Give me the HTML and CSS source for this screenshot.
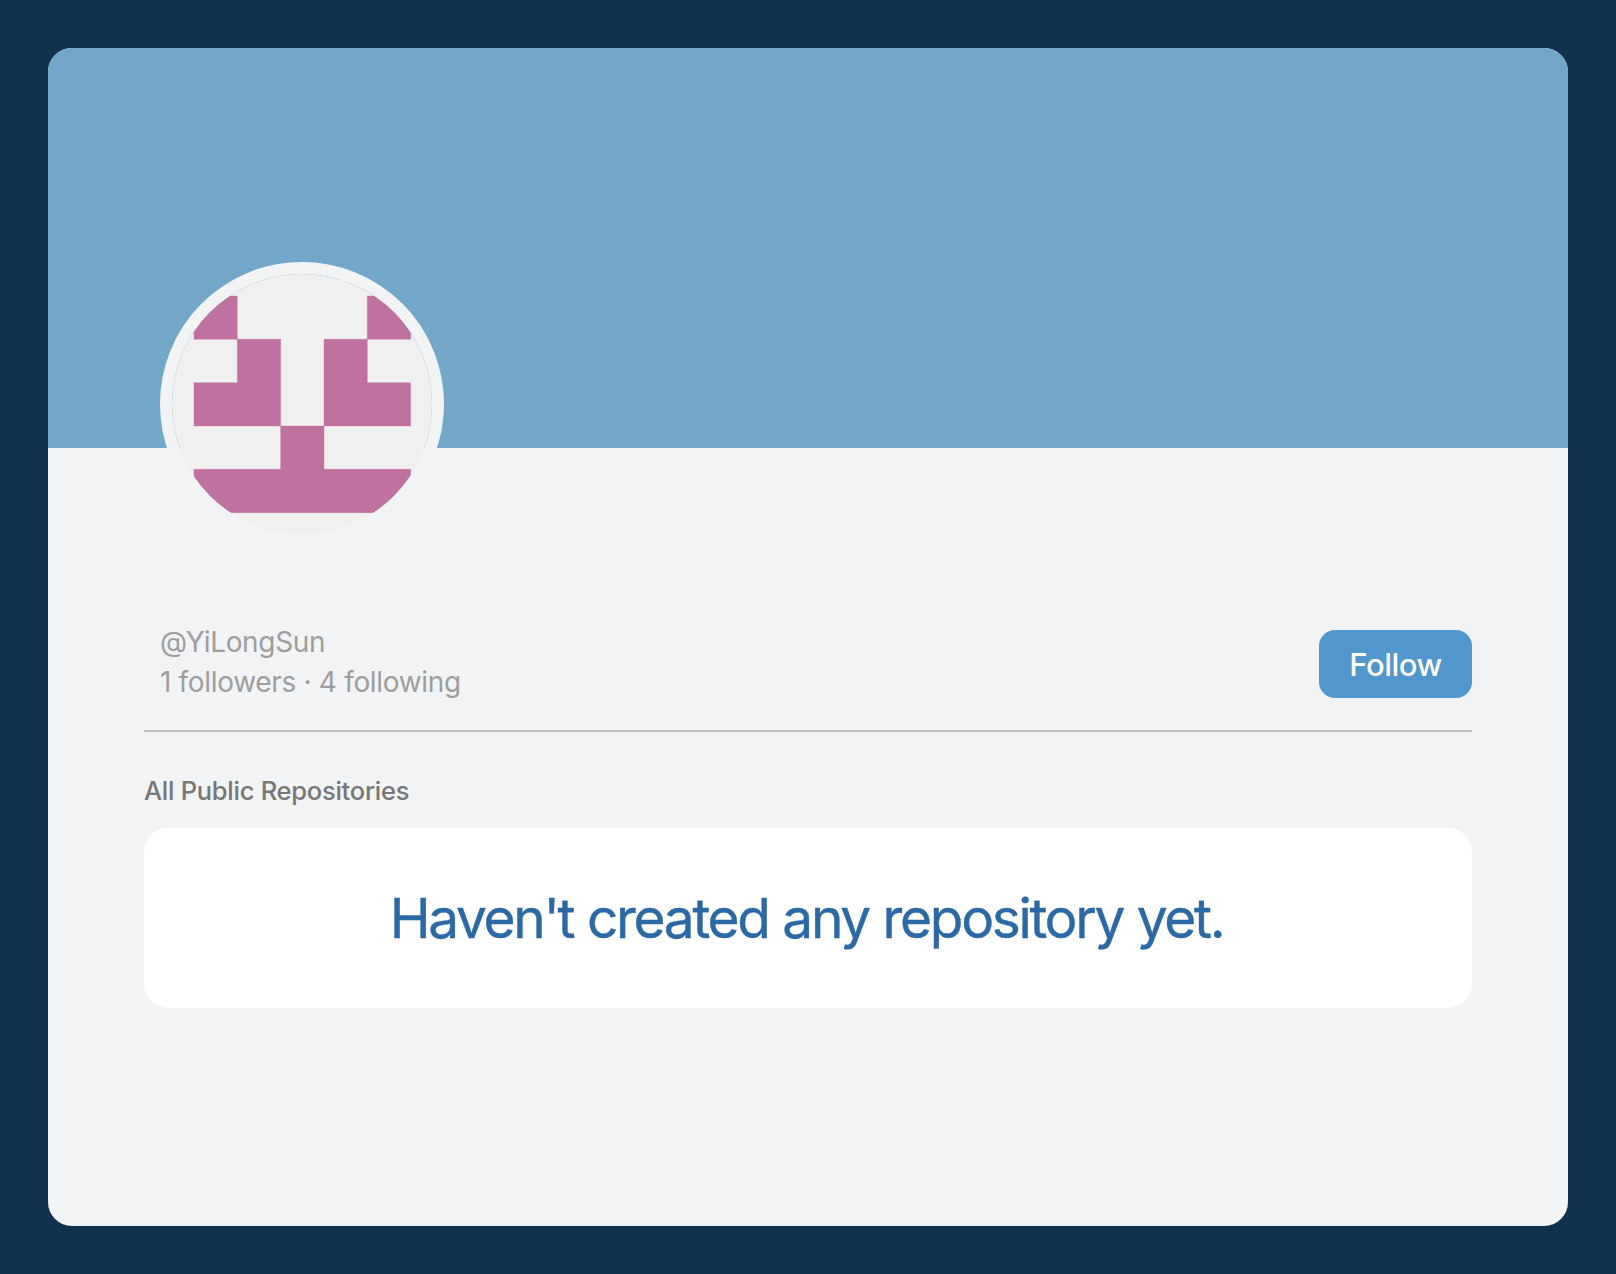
FILE: index.html
```html
<!DOCTYPE html>
<html lang="en">
<head>
<meta charset="utf-8">
<title>YiLongSun</title>
<link rel="stylesheet" href="styles.css">
</head>
<body>
<main class="card">
  <div class="banner"></div>
  <div class="content">
    <div class="avatar">
      <svg class="identicon" viewBox="0 0 420 420" aria-label="YiLongSun">
        <rect width="420" height="420" fill="#f0f0f0"/>
        <path fill="#bf719f" stroke="#bf719f" stroke-width="0.6" d="M35.5 35.5h70v70h-70zM315.5 35.5h70v70h-70zM105.5 105.5h70v140h-140v-70h70zM245.5 105.5h70v70h70v70h-140zM175.5 245.5h70v70h140v70h-350v-70h140z"/>
      </svg>
    </div>
    <div class="profile">
      <div class="info">
        <div class="login">@YiLongSun</div>
        <div class="stats">1 followers · 4 following</div>
      </div>
      <button class="follow">Follow</button>
    </div>
    <h2 class="heading">All Public Repositories</h2>
    <div class="empty">Haven't created any repository yet.</div>
  </div>
</main>
</body>
</html>
```
FILE: styles.css
```css
* { box-sizing: border-box; }
body {
  margin: 0;
  min-height: 1274px;
  padding: 48px;
  background: #12314d;
  font-family: Inter, "Liberation Sans", sans-serif;
}
.card {
  height: 1178px;
  border-radius: 24px;
  background: #f1f3f5;
  overflow: hidden;
}
.banner { height: 400px; background: #73a7ca; }
.content { padding: 0 96px; }
.avatar {
  position: relative;
  width: 284px;
  height: 284px;
  margin: -186px 0 84px 16px;
  border: 12px solid #f1f3f5;
  border-radius: 50%;
}
.identicon { display: block; width: 260px; height: 260px; border-radius: 50%; }
.profile {
  display: flex;
  justify-content: space-between;
  height: 102px;
  padding-left: 16px;
  border-bottom: 2px solid #bbbdbf;
}
.info { margin-top: -8px; font-size: 28px; line-height: 40px; color: #9e9e9e; letter-spacing: -0.32px; }
.follow {
  width: 153px;
  height: 68px;
  padding: 2px 0 0;
  border: 0;
  border-radius: 16px;
  background: #5196cc;
  color: #fff;
  font: 500 31px/66px Inter, sans-serif;
  letter-spacing: -0.5px;
}
.heading {
  margin: 39px 0 17px;
  font-size: 25.5px;
  font-weight: 500;
  line-height: 40px;
  letter-spacing: -0.26px;
  color: #777;
}
.empty {
  height: 180px;
  padding-right: 3px;
  border-radius: 24px;
  background: #fff;
  color: #2c69a4;
  font-size: 55px;
  font-weight: 400;
  -webkit-text-stroke: 0.4px #2c69a4;
  line-height: 180px;
  letter-spacing: -2.33px;
  word-spacing: 0.6px;
  text-align: center;
}
```
